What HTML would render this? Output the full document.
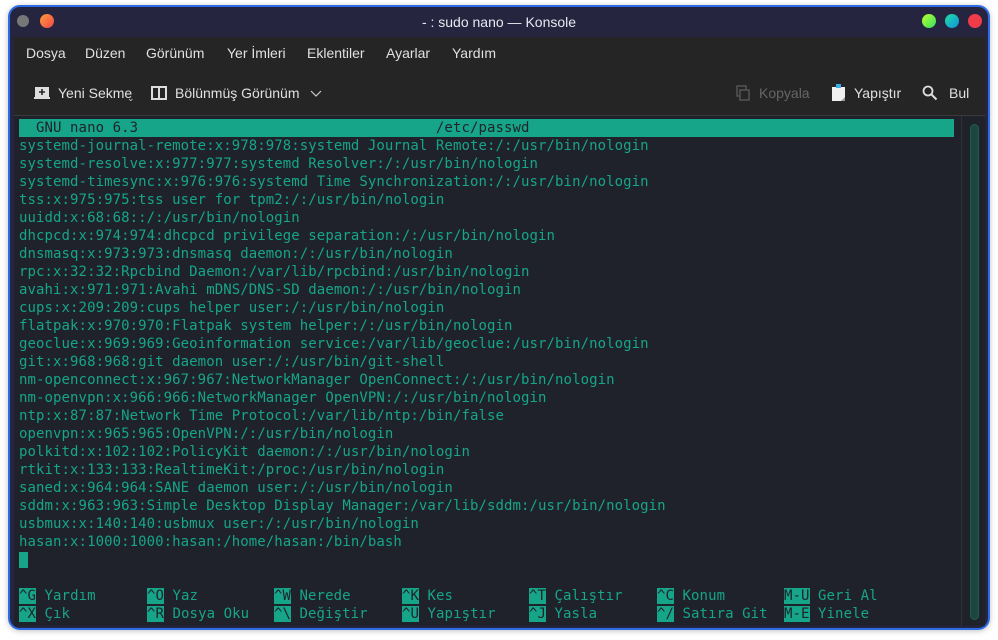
<!DOCTYPE html>
<html><head><meta charset="utf-8"><style>
*{margin:0;padding:0;box-sizing:border-box}
body{width:998px;height:640px;background:#fff;position:relative;overflow:hidden;font-family:"Liberation Sans","DejaVu Sans",sans-serif}
.win{position:absolute;left:8px;top:5px;width:982px;height:625px;border:2px solid #2e6be6;border-radius:12px;background:#25253f;overflow:hidden;box-shadow:0 1px 6px rgba(0,0,0,.25)}
.title{position:absolute;left:0;top:0;width:100%;height:30px;color:#e8e8f0;font-size:14px;text-align:center;line-height:30px}
.dot{position:absolute;top:7px;width:14px;height:14px;border-radius:50%}
.bar{position:absolute;left:4px;top:30px;width:971px;height:78px;background:#252525}
.menu{position:absolute;top:8px;color:#e0e0e0;font-size:14px}
.tb{position:absolute;top:48px;color:#e0e0e0;font-size:14px}
.term{position:absolute;left:4px;top:108px;width:971px;height:511px;background:#1f222a;border-top:1px solid #3a3a3a}
.mono{font-family:"DejaVu Sans Mono","Liberation Mono",monospace;font-size:14px;letter-spacing:0.08px;color:#16a589;line-height:18px;white-space:pre}
.ln{position:absolute;left:5px}
.hl{background:#16a589;color:#1f222a}
</style></head><body>
<div class="win">
<div class="title">- : sudo nano — Konsole</div>
<div class="dot" style="left:7px;background:#777;width:12px;height:12px;top:8px"></div>
<div class="dot" style="left:30px;background:linear-gradient(135deg,#ff9a3a,#f04848)"></div>
<div class="dot" style="left:912px;background:linear-gradient(135deg,#c0ff30,#30e060)"></div>
<div class="dot" style="left:935px;background:linear-gradient(135deg,#20e0a0,#1090e0)"></div>
<div class="dot" style="left:958px;background:#f03c48"></div>
<div class="bar">
<span class="menu" style="left:12px">Dosya</span>
<span class="menu" style="left:71px">Düzen</span>
<span class="menu" style="left:132px">Görünüm</span>
<span class="menu" style="left:213px">Yer İmleri</span>
<span class="menu" style="left:293px">Eklentiler</span>
<span class="menu" style="left:372px">Ayarlar</span>
<span class="menu" style="left:438px">Yardım</span>
<svg style="position:absolute;left:20px;top:49px" width="16" height="14"><rect x="1" y="1" width="14" height="10" fill="#ddd"/><rect x="0" y="11" width="16" height="2" fill="#ddd"/><path d="M8 3v6M5 6h6" stroke="#252525" stroke-width="1.6"/></svg>
<span class="tb" style="left:44px">Yeni Sekme</span>
<span style="position:absolute;left:113px;top:56px;color:#ccc;font-size:9px">⌄</span>
<svg style="position:absolute;left:137px;top:49px" width="16" height="14"><rect x="1" y="1" width="14" height="12" fill="none" stroke="#ddd" stroke-width="2"/><path d="M8 1v12" stroke="#ddd" stroke-width="2"/></svg>
<span class="tb" style="left:161px">Bölünmüş Görünüm</span>
<svg style="position:absolute;left:296px;top:53px" width="12" height="8"><path d="M1 1l5 5 5-5" stroke="#ccc" fill="none" stroke-width="1.2"/></svg>
<svg style="position:absolute;left:722px;top:48px" width="14" height="16"><rect x="1" y="1" width="9" height="10" fill="none" stroke="#555" stroke-width="1.5"/><rect x="4" y="5" width="9" height="10" fill="#252525" stroke="#555" stroke-width="1.5"/></svg>
<span class="tb" style="left:745px;color:#666">Kopyala</span>
<svg style="position:absolute;left:817px;top:46px" width="16" height="19"><rect x="1" y="4" width="13" height="14" fill="#f0f0f0"/><rect x="5" y="1" width="5" height="4" fill="#3daee9"/><path d="M10 18l4-4v4z" fill="#999"/></svg>
<span class="tb" style="left:840px">Yapıştır</span>
<svg style="position:absolute;left:908px;top:48px" width="16" height="16"><circle cx="6" cy="6" r="4.5" fill="none" stroke="#ddd" stroke-width="1.8"/><path d="M9.5 9.5l5 5" stroke="#ddd" stroke-width="2"/></svg>
<span class="tb" style="left:935px">Bul</span>
</div>
<div class="term">
<div style="position:absolute;left:947px;top:0;width:1px;height:511px;background:#2e3138"></div>
<div style="position:absolute;left:956px;top:8px;width:9px;height:496px;border-radius:5px;background:#1c4640;border:1px solid #25594f"></div>
<div class="mono ln" style="top:3px;width:935px;overflow:hidden" ><span class="hl" style="display:block">  GNU nano 6.3                                   /etc/passwd                                                                                       </span></div>
<div class="mono ln" style="top:21px">systemd-journal-remote:x:978:978:systemd Journal Remote:/:/usr/bin/nologin
systemd-resolve:x:977:977:systemd Resolver:/:/usr/bin/nologin
systemd-timesync:x:976:976:systemd Time Synchronization:/:/usr/bin/nologin
tss:x:975:975:tss user for tpm2:/:/usr/bin/nologin
uuidd:x:68:68::/:/usr/bin/nologin
dhcpcd:x:974:974:dhcpcd privilege separation:/:/usr/bin/nologin
dnsmasq:x:973:973:dnsmasq daemon:/:/usr/bin/nologin
rpc:x:32:32:Rpcbind Daemon:/var/lib/rpcbind:/usr/bin/nologin
avahi:x:971:971:Avahi mDNS/DNS-SD daemon:/:/usr/bin/nologin
cups:x:209:209:cups helper user:/:/usr/bin/nologin
flatpak:x:970:970:Flatpak system helper:/:/usr/bin/nologin
geoclue:x:969:969:Geoinformation service:/var/lib/geoclue:/usr/bin/nologin
git:x:968:968:git daemon user:/:/usr/bin/git-shell
nm-openconnect:x:967:967:NetworkManager OpenConnect:/:/usr/bin/nologin
nm-openvpn:x:966:966:NetworkManager OpenVPN:/:/usr/bin/nologin
ntp:x:87:87:Network Time Protocol:/var/lib/ntp:/bin/false
openvpn:x:965:965:OpenVPN:/:/usr/bin/nologin
polkitd:x:102:102:PolicyKit daemon:/:/usr/bin/nologin
rtkit:x:133:133:RealtimeKit:/proc:/usr/bin/nologin
saned:x:964:964:SANE daemon user:/:/usr/bin/nologin
sddm:x:963:963:Simple Desktop Display Manager:/var/lib/sddm:/usr/bin/nologin
usbmux:x:140:140:usbmux user:/:/usr/bin/nologin
hasan:x:1000:1000:hasan:/home/hasan:/bin/bash
<span class="hl"> </span></div>
<div class="mono ln" style="top:471px;left:5px"><span class="hl">^G</span> Yardım
<span class="hl">^X</span> Çık</div>
<div class="mono ln" style="top:471px;left:133px"><span class="hl">^O</span> Yaz
<span class="hl">^R</span> Dosya Oku</div>
<div class="mono ln" style="top:471px;left:260px"><span class="hl">^W</span> Nerede
<span class="hl">^\</span> Değiştir</div>
<div class="mono ln" style="top:471px;left:388px"><span class="hl">^K</span> Kes
<span class="hl">^U</span> Yapıştır</div>
<div class="mono ln" style="top:471px;left:515px"><span class="hl">^T</span> Çalıştır
<span class="hl">^J</span> Yasla</div>
<div class="mono ln" style="top:471px;left:643px"><span class="hl">^C</span> Konum
<span class="hl">^/</span> Satıra Git</div>
<div class="mono ln" style="top:471px;left:770px"><span class="hl">M-U</span> Geri Al
<span class="hl">M-E</span> Yinele</div>
</div>
</div>
</body></html>
